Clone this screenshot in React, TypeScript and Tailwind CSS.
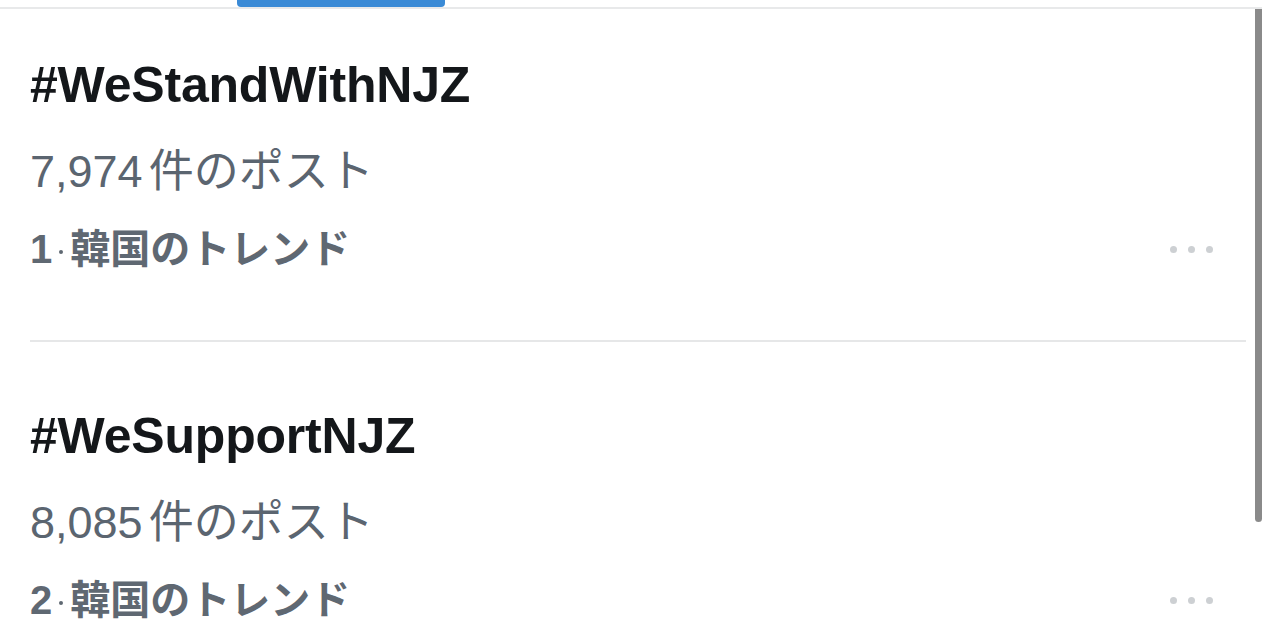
import React from 'react';

// ── Types ──────────────────────────────────────────────────────────────────

type Trend = {
  rank: number;
  tag: string;
  posts: string;
  region: string;
};

const TRENDS: Trend[] = [
  { rank: 1, tag: '#WeStandWithNJZ', posts: '7,974', region: '韓国のトレンド' },
  { rank: 2, tag: '#WeSupportNJZ', posts: '8,085', region: '韓国のトレンド' },
];

const FONT = "font-['Liberation_Sans','Noto_Sans_CJK_JP',sans-serif]";

// ── Pieces ─────────────────────────────────────────────────────────────────

function MoreDots() {
  return (
    <div className="mr-[33px] flex items-center gap-[11px]" aria-label="More">
      <span className="h-[7px] w-[7px] rounded-full bg-[#cdd0d3]" />
      <span className="h-[7px] w-[7px] rounded-full bg-[#cdd0d3]" />
      <span className="h-[7px] w-[7px] rounded-full bg-[#cdd0d3]" />
    </div>
  );
}

function TrendItem({ trend }: { trend: Trend }) {
  return (
    <div className="flex flex-col">
      <p className="text-[50px] font-bold leading-[56px] tracking-[-0.2px] text-[#14171a]">
        {trend.tag}
      </p>
      <p className="mt-[33px] text-[45px] leading-[52px] text-[#5b6570]">
        <span className="mr-[6px]">{trend.posts}</span>件のポスト
      </p>
      <div className="mt-[27px] flex h-[48px] items-center justify-between">
        <p className="text-[40px] font-semibold leading-[48px] text-[#5f6872]">
          {trend.rank}
          <span className="mx-[7px] inline-block h-[4px] w-[4px] rounded-full bg-current align-[9px]" aria-hidden="true" />
          {trend.region}
        </p>
        <MoreDots />
      </div>
    </div>
  );
}

// ── Page ───────────────────────────────────────────────────────────────────

export default function App() {
  return (
    <div className={`relative h-[643px] w-[1262px] overflow-hidden bg-white ${FONT}`}>
      {/* Tab strip */}
      <div className="h-[9px] border-b-2 border-[#e8e9ea]">
        <div className="ml-[237px] h-[7px] w-[208px] rounded-b-[4px] bg-[#3a8ad6]" />
      </div>

      {/* Trend list */}
      <div className="pl-[30px] pr-[16px]">
        <div className="pt-[48px] pb-[67px]">
          <TrendItem trend={TRENDS[0]} />
        </div>
        <div className="h-[2px] bg-[#e6e7e8]" />
        <div className="pt-[66px]">
          <TrendItem trend={TRENDS[1]} />
        </div>
      </div>

      {/* Scrollbar */}
      <div className="absolute right-0 top-[9px] h-[513px] w-[7px] rounded-b-[4px] bg-[#8a8a8a]" />
    </div>
  );
}
